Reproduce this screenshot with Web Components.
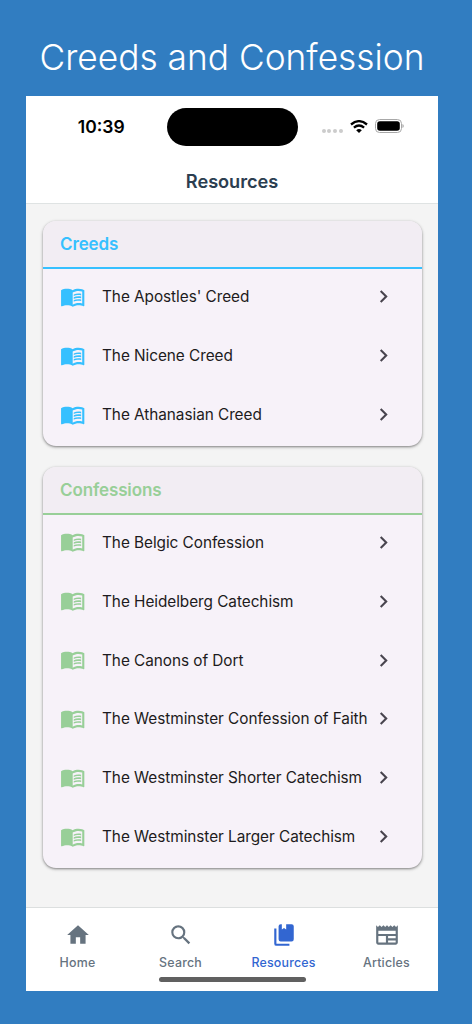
<!DOCTYPE html>
<html lang="en">
<head>
<meta charset="utf-8">
<title>Creeds and Confession</title>
<style>
html,body{margin:0;height:100%}
body{background:#317dc1;font-family:Inter,"Liberation Sans",sans-serif;overflow:hidden}
</style>
</head>
<body>
<resource-app></resource-app>
<script>
const define = (name, css, html, setup) => customElements.define(name, class extends HTMLElement {
  connectedCallback() {
    if (this.shadowRoot) return;
    const t = document.createElement('template');
    t.innerHTML = `<style>*{box-sizing:border-box}${css}</style>${typeof html === 'function' ? html(this) : html}`;
    this.attachShadow({mode:'open'}).append(t.content.cloneNode(true));
    if (setup) setup(this, this.shadowRoot);
  }
});

const ICONS = {
  book: 'M21 5c-1.11-.35-2.33-.5-3.5-.5-1.95 0-4.05.4-5.5 1.5-1.45-1.1-3.55-1.5-5.5-1.5S2.45 4.9 1 6v14.65c0 .25.25.5.5.5.1 0 .15-.05.25-.05C3.1 20.45 5.05 20 6.5 20c1.95 0 4.05.4 5.5 1.5 1.35-.85 3.8-1.5 5.5-1.5 1.65 0 3.35.3 4.75 1.05.1.05.15.05.25.05.25 0 .5-.25.5-.5V6c-.6-.45-1.25-.75-2-1zm0 13.5c-1.1-.35-2.3-.5-3.5-.5-1.7 0-4.15.65-5.5 1.5V8c1.35-.85 3.8-1.5 5.5-1.5 1.2 0 2.4.15 3.5.5v11.5zM17.5 10.5c.88 0 1.73.09 2.5.26V9.24c-.79-.15-1.64-.24-2.5-.24-1.7 0-3.24.29-4.5.83v1.66c1.13-.64 2.7-.99 4.5-.99zM13 12.49v1.66c1.13-.64 2.7-.99 4.5-.99.88 0 1.73.09 2.5.26V11.9c-.79-.15-1.64-.24-2.5-.24-1.7 0-3.24.3-4.5.83zM17.5 14.33c-1.7 0-3.24.29-4.5.83v1.66c1.13-.64 2.7-.99 4.5-.99.88 0 1.73.09 2.5.26v-1.52c-.79-.16-1.64-.24-2.5-.24z',
  chevron: 'M8.59 16.58L13.17 12 8.59 7.41 10 6l6 6-6 6-1.41-1.42z',
  home: 'M10 20v-6h4v6h5v-8h3L12 3 2 12h3v8z',
  search: 'M15.5 14h-.79l-.28-.27A6.471 6.471 0 0 0 16 9.5 6.5 6.5 0 1 0 9.5 16c1.61 0 3.09-.59 4.23-1.57l.27.28v.79l5 4.99L20.49 19l-4.99-5zm-6 0C7.01 14 5 11.99 5 9.5S7.01 5 9.5 5 14 7.01 14 9.5 11.99 14 9.5 14z',
  library: 'M19 18H9a2 2 0 0 1-2-2V4a2 2 0 0 1 2-2h1v5l2-1.5L14 7V2h5a2 2 0 0 1 2 2v12a2 2 0 0 1-2 2zM17 20v2H5a2 2 0 0 1-2-2V6h2v14h12z',
  news: 'M22 3l-1.67 1.67L18.67 3 17 4.67 15.33 3l-1.66 1.67L12 3l-1.67 1.67L8.67 3 7 4.67 5.33 3 3.67 4.67 2 3v16c0 1.1.9 2 2 2h16c1.1 0 2-.9 2-2V3zM11 19H4v-6h7v6zm9 0h-7v-2h7v2zm0-4h-7v-2h7v2zm0-4H4V8h16v3z'
};

define('app-icon', ':host{display:block;width:25px;height:25px;flex:none}svg{display:block;width:100%;height:100%;fill:currentColor;overflow:visible}',
  el => `<svg viewBox="0 0 24 24"><path d="${ICONS[el.getAttribute('name')]}"/></svg>`);

define('status-bar', `
:host{display:grid;grid-template-columns:140.5px 131.5px 1fr;height:63px;padding-top:11.5px;align-items:start;color:#000}
.time{padding-left:10px;text-align:center;font-size:17.5px;font-weight:600;letter-spacing:0;line-height:37px}
.island{height:38.7px;border-radius:20px;background:#000}
.right{display:flex;align-items:center;padding-left:23.5px;height:37px}
.dots{display:flex;gap:1.7px;margin-top:9px}.dots i{width:4px;height:4px;border-radius:50%;background:#ccc}
.wifi{width:18px;height:13px;margin-left:7.5px}.bat{width:29px;height:14px;margin-left:7px}`,
`<div class="time">10:39</div><div class="island"></div>
<div class="right"><div class="dots"><i></i><i></i><i></i><i></i></div>
<svg class="wifi" viewBox="0 0 18 13" fill="none" stroke="#000" stroke-width="2.3"><path d="M1 4.5Q9-2.2 17 4.5M3.9 7.7Q9 3.4 14.1 7.7"/><path d="M6.2 10.2Q9 8 11.8 10.2L9 13z" fill="#000" stroke="none"/></svg>
<svg class="bat" viewBox="0 0 29 14"><rect x=".5" y=".5" width="26" height="13" rx="4" fill="none" stroke="#a8a8a8"/><rect x="2.2" y="2.2" width="22.6" height="9.6" rx="2.7"/><path d="M27.5 5v4q1.2-.6 1.2-2t-1.2-2z" fill="#999"/></svg></div>`);

define('page-title', ':host{display:block;height:45px;border-bottom:1px solid #dfe3e3;text-align:center;font-size:18.2px;line-height:44px;font-weight:580;color:#2c3e50;letter-spacing:-.05px}', '<slot></slot>');

define('resource-card', `
:host{display:block;border-radius:13px;background:#f7f2f9;overflow:hidden;box-shadow:0 1px 2.5px rgba(0,0,0,.42),0 1px 4px rgba(0,0,0,.1)}
header{height:48px;border-bottom:2px solid var(--accent);background:#f2edf3;color:var(--accent);font-size:17px;font-weight:560;line-height:47.5px;padding-left:17px;letter-spacing:-.12px}
`, el => `<header>${el.getAttribute('heading')}</header><slot></slot>`);

define('resource-row', `
:host{display:flex;align-items:center;height:58.85px;padding:0 25.2px 3px 17px;color:#1d1b20;font-size:15.35px;letter-spacing:-.05px;white-space:nowrap}
.book{color:var(--accent);width:25.4px;height:25.4px;margin:-.6px 17px 0 -.4px}
span{flex:1}.chev{color:#49454f;width:25px;height:25px;margin-left:-2px}`,
'<app-icon class="book" name="book"></app-icon><span><slot></slot></span><app-icon class="chev" name="chevron"></app-icon>');

define('tab-item', `
:host{display:flex;flex-direction:column;align-items:center;color:#66737f;font-size:12.4px;font-weight:500;letter-spacing:.2px;line-height:16px;gap:7.5px;padding-top:13.5px}
app-icon{width:26px;height:26px}
:host([active]){color:#3266d1}`,
el => `<app-icon name="${el.getAttribute('icon')}"></app-icon><span><slot></slot></span>`);

define('tab-bar', `
:host{display:flex;flex-direction:column;align-items:center;height:84px;box-sizing:border-box;border-top:1px solid #dcdfdf;background:#fff}
nav{display:grid;grid-template-columns:repeat(4,1fr);align-self:stretch;height:69px}
.grip{width:147px;height:5px;border-radius:3px;background:#606060}`,
'<nav><slot></slot></nav><div class="grip"></div>');

define('resource-app', `
:host{display:block;height:1024px}
h1{margin:0;height:96px;padding-top:34px;text-align:center;font-size:35.3px;line-height:48px;font-weight:350;letter-spacing:0;color:#fff;white-space:nowrap;padding-right:8px}
.phone{display:flex;flex-direction:column;width:412px;height:895px;margin-left:26px;background:#fff}
main{flex:1;background:#f4f4f4;padding:17px 16.5px 0 17px}
.green{margin-top:21px}`,
`<h1>Creeds and Confession</h1>
<div class="phone"><status-bar></status-bar><page-title>Resources</page-title>
<main><resource-card heading="Creeds" style="--accent:#36c0ff"><resource-row>The Apostles' Creed</resource-row><resource-row>The Nicene Creed</resource-row><resource-row>The Athanasian Creed</resource-row></resource-card>
<resource-card class="green" heading="Confessions" style="--accent:#98cf98"><resource-row>The Belgic Confession</resource-row><resource-row>The Heidelberg Catechism</resource-row><resource-row>The Canons of Dort</resource-row><resource-row>The Westminster Confession of Faith</resource-row><resource-row>The Westminster Shorter Catechism</resource-row><resource-row>The Westminster Larger Catechism</resource-row></resource-card></main>
<tab-bar><tab-item icon="home">Home</tab-item><tab-item icon="search">Search</tab-item><tab-item icon="library" active>Resources</tab-item><tab-item icon="news">Articles</tab-item></tab-bar></div>`);
</script>
</body>
</html>
